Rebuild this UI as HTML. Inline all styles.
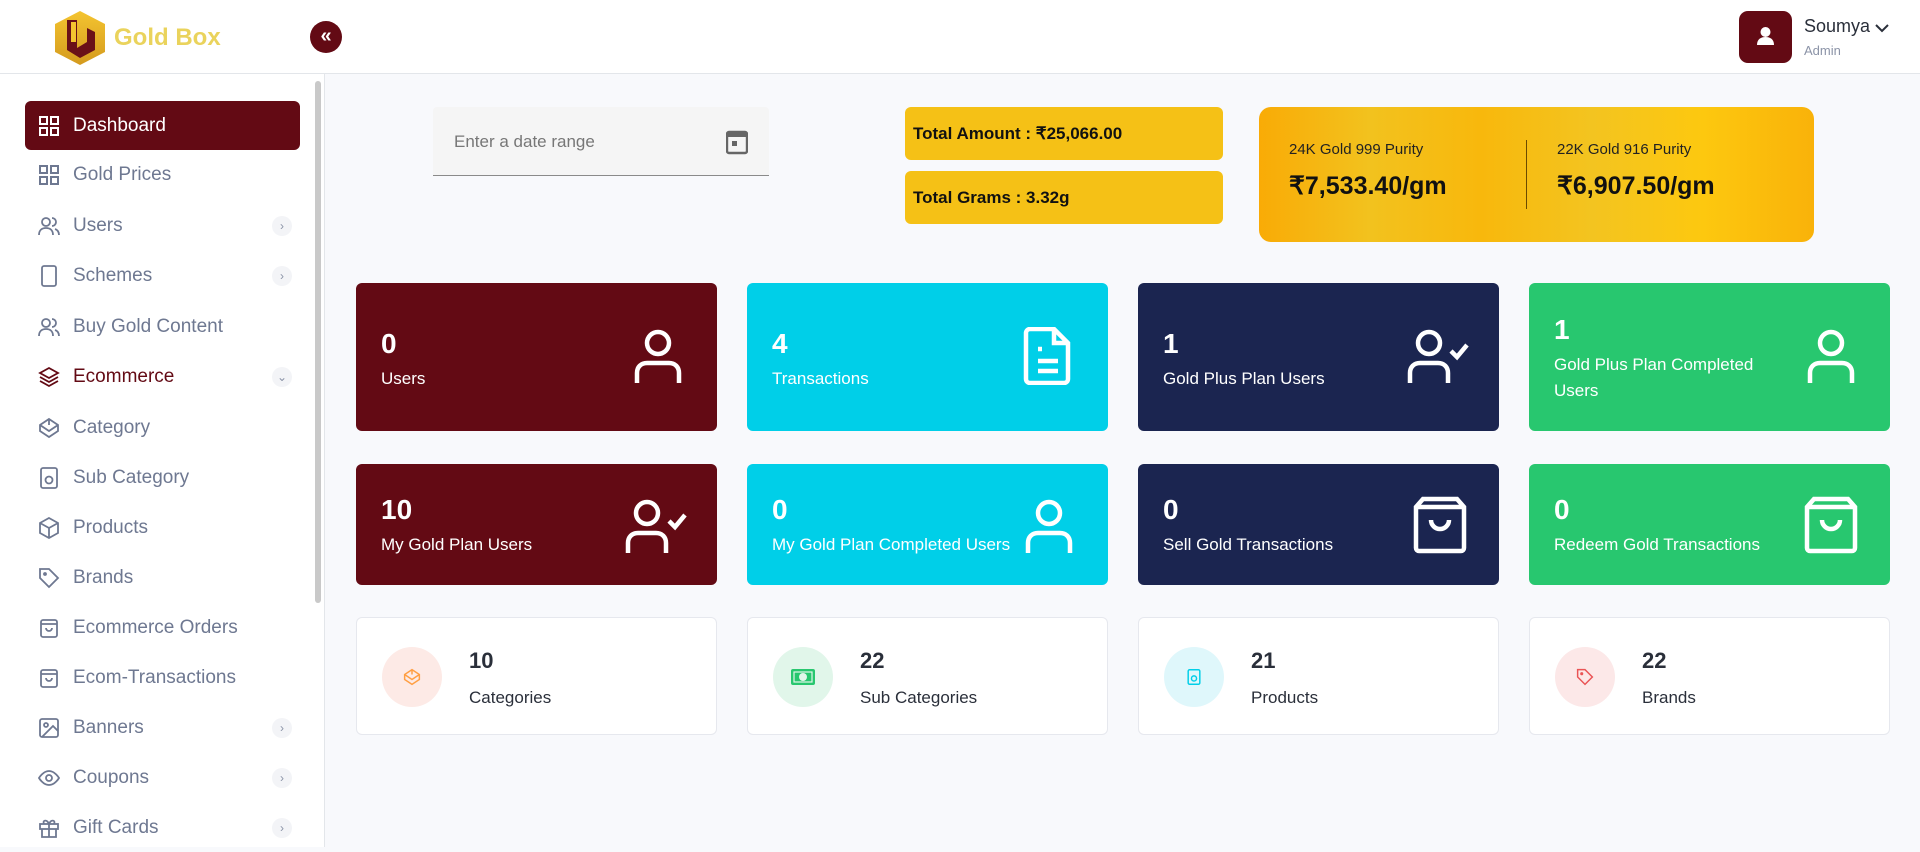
<!DOCTYPE html>
<html><head><meta charset="utf-8"><style>
*{box-sizing:border-box;margin:0;padding:0}
body{width:1920px;height:847px;overflow:hidden;background:#f8f9fc;font-family:"Liberation Sans",sans-serif;position:relative}
.hdr{position:absolute;left:0;top:0;width:1920px;height:74px;background:#fff;border-bottom:1px solid #e3e6ea}
.side{position:absolute;left:0;top:74px;width:325px;height:773px;background:#fff;border-right:1px solid #e3e6ea}
.mi{position:absolute;left:25px;width:275px;height:49px;display:flex;align-items:center;color:#6e7891;font-size:19px}
.mi svg{position:absolute;left:13px;width:22px;height:22px}
.mi span{position:absolute;left:48px}
.mi .ch{position:absolute;left:247px;width:20px;height:20px;border-radius:50%;background:#f3f4f7;color:#8b93a7;font-size:12px;display:flex;align-items:center;justify-content:center}
.act{background:#630a14;color:#fff;border-radius:6px}
.card{position:absolute;width:361px;border-radius:6px;color:#fff}
.card .n{position:absolute;left:25px;font-size:28px;font-weight:bold}
.card .l{position:absolute;left:25px;font-size:17px;line-height:26px}
.card svg{position:absolute;right:30px;width:58px;height:58px}
.wc{position:absolute;top:617px;height:118px;width:361px;background:#fff;border:1px solid #e6e8ee;border-radius:6px}
.wc .c{position:absolute;left:25px;top:29px;width:60px;height:60px;border-radius:50%;display:flex;align-items:center;justify-content:center}
.wc .n{position:absolute;left:112px;top:30px;font-size:22px;font-weight:bold;color:#2a2f3a}
.wc .l{position:absolute;left:112px;top:70px;font-size:17px;color:#2a2f3a}
</style></head><body>
<div class="hdr">
  <svg style="position:absolute;left:53px;top:10px" width="54" height="56" viewBox="0 0 54 56"><defs><linearGradient id="g" x1="0" y1="0" x2="0" y2="1"><stop offset="0" stop-color="#f4c430"/><stop offset="1" stop-color="#d49a1e"/></linearGradient></defs><polygon points="27,1 52,14 52,42 27,55 2,42 2,14" fill="url(#g)"/><path d="M14 10h10v28l10 -6V18l8 4v18l-15 8-13-8z" fill="#6a1018"/><path d="M18 12h5v20h-5z" fill="#f4c430"/></svg>
  <div style="position:absolute;left:114px;top:24px;font-size:24px;font-weight:bold;color:#ead35c">Gold Box</div>
  <div style="position:absolute;left:310px;top:21px;width:32px;height:32px;border-radius:50%;background:#630a14;color:#fff;font-size:20px;font-weight:bold;text-align:center;line-height:30px">«</div>
  <div style="position:absolute;left:1739px;top:11px;width:53px;height:52px;border-radius:9px;background:#630a14"><svg width="53" height="52" viewBox="0 0 53 52"><circle cx="26.5" cy="21" r="5" fill="#fff"/><path d="M18 34c0-6 4-8 8.5-8s8.5 2 8.5 8z" fill="#fff"/></svg></div>
  <div style="position:absolute;left:1804px;top:16px;font-size:18px;color:#2a2f3a">Soumya</div>
  <div style="position:absolute;left:1804px;top:43px;font-size:13px;color:#8b93a7">Admin</div>
  <svg style="position:absolute;left:1874px;top:22px" width="16" height="12" viewBox="0 0 16 12"><path d="M2 3l6 6 6-6" fill="none" stroke="#2a2f3a" stroke-width="2"/></svg>
</div>
<div class="side">
  <div style="position:absolute;left:315px;top:7px;width:6px;height:522px;border-radius:3px;background:#c9c9c9"></div>
</div>
<div class="mi act" style="top:101px"><svg viewBox="0 0 22 22" fill="none" stroke="#fff" stroke-width="2"><rect x="2" y="2" width="7" height="7"/><rect x="13" y="2" width="7" height="7"/><rect x="2" y="13" width="7" height="7"/><rect x="13" y="13" width="7" height="7"/></svg><span>Dashboard</span></div>
<div class="mi" style="top:150px"><svg viewBox="0 0 22 22" fill="none" stroke="#6e7891" stroke-width="2"><rect x="2" y="2" width="7" height="7"/><rect x="13" y="2" width="7" height="7"/><rect x="2" y="13" width="7" height="7"/><rect x="13" y="13" width="7" height="7"/></svg><span>Gold Prices</span></div>
<div class="mi" style="top:201px"><svg viewBox="0 0 22 22" fill="none" stroke="#6e7891" stroke-width="1.8"><circle cx="8" cy="7" r="4"/><path d="M1 20c0-5 3-7 7-7s7 2 7 7M14 3a4 4 0 010 8M17 14c3 1 4 3 4 6"/></svg><span>Users</span><div class="ch">›</div></div>
<div class="mi" style="top:251px"><svg viewBox="0 0 22 22" fill="none" stroke="#6e7891" stroke-width="1.8"><rect x="4" y="1" width="14" height="20" rx="2"/><path d="M11 17h.01"/></svg><span>Schemes</span><div class="ch">›</div></div>
<div class="mi" style="top:302px"><svg viewBox="0 0 22 22" fill="none" stroke="#6e7891" stroke-width="1.8"><circle cx="8" cy="7" r="4"/><path d="M1 20c0-5 3-7 7-7s7 2 7 7M14 3a4 4 0 010 8M17 14c3 1 4 3 4 6"/></svg><span>Buy Gold Content</span></div>
<div class="mi" style="top:352px;color:#630a14"><svg viewBox="0 0 22 22" fill="none" stroke="#630a14" stroke-width="1.8"><path d="M11 2l9 5-9 5-9-5zM2 11l9 5 9-5M2 15l9 5 9-5"/></svg><span>Ecommerce</span><div class="ch">⌄</div></div>
<div class="mi" style="top:403px"><svg viewBox="0 0 22 22" fill="none" stroke="#6e7891" stroke-width="1.8"><path d="M11 2l9 6v6l-9 6-9-6V8z M2 8l9 6 9-6M11 2v6"/></svg><span>Category</span></div>
<div class="mi" style="top:453px"><svg viewBox="0 0 22 22" fill="none" stroke="#6e7891" stroke-width="1.8"><rect x="3" y="1" width="16" height="20" rx="2"/><circle cx="11" cy="13" r="3.5"/></svg><span>Sub Category</span></div>
<div class="mi" style="top:503px"><svg viewBox="0 0 22 22" fill="none" stroke="#6e7891" stroke-width="1.8"><path d="M11 1l9 5v10l-9 5-9-5V6zM2 6l9 5 9-5M11 11v10"/></svg><span>Products</span></div>
<div class="mi" style="top:553px"><svg viewBox="0 0 22 22" fill="none" stroke="#6e7891" stroke-width="1.8"><path d="M2 2h9l9 9-9 9-9-9z"/><circle cx="7" cy="7" r="1"/></svg><span>Brands</span></div>
<div class="mi" style="top:603px"><svg viewBox="0 0 22 22" fill="none" stroke="#6e7891" stroke-width="1.8"><rect x="3" y="3" width="16" height="17" rx="2"/><path d="M3 7h16M8 11a3 3 0 006 0"/></svg><span>Ecommerce Orders</span></div>
<div class="mi" style="top:653px"><svg viewBox="0 0 22 22" fill="none" stroke="#6e7891" stroke-width="1.8"><rect x="3" y="3" width="16" height="17" rx="2"/><path d="M3 7h16M8 11a3 3 0 006 0"/></svg><span>Ecom-Transactions</span></div>
<div class="mi" style="top:703px"><svg viewBox="0 0 22 22" fill="none" stroke="#6e7891" stroke-width="1.8"><rect x="2" y="2" width="18" height="18" rx="2"/><circle cx="8" cy="8" r="2"/><path d="M20 14l-5-5-11 11"/></svg><span>Banners</span><div class="ch">›</div></div>
<div class="mi" style="top:753px"><svg viewBox="0 0 22 22" fill="none" stroke="#6e7891" stroke-width="1.8"><path d="M1 11s4-7 10-7 10 7 10 7-4 7-10 7S1 11 1 11z"/><circle cx="11" cy="11" r="3"/></svg><span>Coupons</span><div class="ch">›</div></div>
<div class="mi" style="top:803px"><svg viewBox="0 0 22 22" fill="none" stroke="#6e7891" stroke-width="1.8"><rect x="2" y="7" width="18" height="5"/><path d="M4 12v8h14v-8M11 7v13M11 7c-2-5-7-4-5 0M11 7c2-5 7-4 5 0"/></svg><span>Gift Cards</span><div class="ch">›</div></div>

<div style="position:absolute;left:433px;top:107px;width:336px;height:69px;background:#f5f5f5;border-bottom:1px solid #8a8a8a;border-radius:4px 4px 0 0">
  <div style="position:absolute;left:21px;top:25px;font-size:17px;color:#777">Enter a date range</div>
  <svg style="position:absolute;left:293px;top:22px" width="22" height="26" viewBox="0 0 22 26"><rect x="1" y="3" width="20" height="21" rx="2" fill="none" stroke="#666" stroke-width="2.4"/><rect x="1" y="3" width="20" height="5" fill="#666"/><rect x="6" y="12" width="5" height="5" fill="#666"/></svg>
</div>
<div style="position:absolute;left:905px;top:107px;width:318px;height:53px;background:#f5c116;border-radius:6px;font-size:17px;font-weight:bold;color:#111;padding:17px 0 0 8px">Total Amount : ₹25,066.00</div>
<div style="position:absolute;left:905px;top:171px;width:318px;height:53px;background:#f5c116;border-radius:6px;font-size:17px;font-weight:bold;color:#111;padding:17px 0 0 8px">Total Grams : 3.32g</div>
<div style="position:absolute;left:1259px;top:107px;width:555px;height:135px;border-radius:12px;background:linear-gradient(90deg,#f9ab06,#f2c21e 20%,#f8b80c 40%,#f3c420 60%,#fdc80f 80%,#f9b209)">
  <div style="position:absolute;left:30px;top:34px;font-size:15px;color:#222">24K Gold 999 Purity</div>
  <div style="position:absolute;left:30px;top:64px;font-size:25px;font-weight:bold;color:#111">₹7,533.40/gm</div>
  <div style="position:absolute;left:267px;top:33px;width:1px;height:69px;background:#6b4a00"></div>
  <div style="position:absolute;left:298px;top:34px;font-size:15px;color:#222">22K Gold 916 Purity</div>
  <div style="position:absolute;left:298px;top:64px;font-size:25px;font-weight:bold;color:#111">₹6,907.50/gm</div>
</div>

<!-- row1 -->
<div class="card" style="left:356px;top:283px;height:148px;background:#630a14"><div class="n" style="top:45px">0</div><div class="l" style="top:83px">Users</div><svg viewBox="0 0 58 58" fill="none" stroke="#fff" stroke-width="4.5" style="top:44px"><circle cx="29" cy="16" r="11"/><path d="M8 56V46c0-6 4-10 10-10h22c6 0 10 4 10 10v10"/></svg></div>
<div class="card" style="left:747px;top:283px;height:148px;background:#00cfe8"><div class="n" style="top:45px">4</div><div class="l" style="top:83px">Transactions</div><svg viewBox="0 0 58 58" fill="none" stroke="#fff" stroke-width="4.5" style="top:44px"><path d="M10 2h24l14 14v36a4 4 0 01-4 4H10a4 4 0 01-4-4V6a4 4 0 014-4zM34 2v14h14M18 22h4M18 34h20M18 44h20"/></svg></div>
<div class="card" style="left:1138px;top:283px;height:148px;background:#1b2550"><div class="n" style="top:45px">1</div><div class="l" style="top:83px">Gold Plus Plan Users</div><svg viewBox="0 0 62 58" fill="none" stroke="#fff" stroke-width="4.5" style="top:44px;width:62px"><circle cx="22" cy="16" r="11"/><path d="M3 56V46c0-6 4-10 10-10h18c6 0 10 4 10 10v10M44 24l6 6 10-12"/></svg></div>
<div class="card" style="left:1529px;top:283px;height:148px;background:#28c76f"><div class="n" style="top:31px">1</div><div class="l" style="top:69px">Gold Plus Plan Completed<br>Users</div><svg viewBox="0 0 58 58" fill="none" stroke="#fff" stroke-width="4.5" style="top:44px"><circle cx="29" cy="16" r="11"/><path d="M8 56V46c0-6 4-10 10-10h22c6 0 10 4 10 10v10"/></svg></div>
<!-- row2 -->
<div class="card" style="left:356px;top:464px;height:121px;background:#630a14"><div class="n" style="top:30px">10</div><div class="l" style="top:68px">My Gold Plan Users</div><svg viewBox="0 0 62 58" fill="none" stroke="#fff" stroke-width="4.5" style="top:33px;width:62px"><circle cx="22" cy="16" r="11"/><path d="M3 56V46c0-6 4-10 10-10h18c6 0 10 4 10 10v10M44 24l6 6 10-12"/></svg></div>
<div class="card" style="left:747px;top:464px;height:121px;background:#00cfe8"><div class="n" style="top:30px">0</div><div class="l" style="top:68px">My Gold Plan Completed Users</div><svg viewBox="0 0 58 58" fill="none" stroke="#fff" stroke-width="4.5" style="top:33px"><circle cx="29" cy="16" r="11"/><path d="M8 56V46c0-6 4-10 10-10h22c6 0 10 4 10 10v10"/></svg></div>
<div class="card" style="left:1138px;top:464px;height:121px;background:#1b2550"><div class="n" style="top:30px">0</div><div class="l" style="top:68px">Sell Gold Transactions</div><svg viewBox="0 0 58 58" fill="none" stroke="#fff" stroke-width="4.5" style="top:32px"><path d="M12 3h34l7 8v41a3 3 0 01-3 3H8a3 3 0 01-3-3V11zM5 11h48M20 24a9 9 0 0018 0"/></svg></div>
<div class="card" style="left:1529px;top:464px;height:121px;background:#28c76f"><div class="n" style="top:30px">0</div><div class="l" style="top:68px">Redeem Gold Transactions</div><svg viewBox="0 0 58 58" fill="none" stroke="#fff" stroke-width="4.5" style="top:32px"><path d="M12 3h34l7 8v41a3 3 0 01-3 3H8a3 3 0 01-3-3V11zM5 11h48M20 24a9 9 0 0018 0"/></svg></div>
<!-- row3 -->
<div class="wc" style="left:356px"><div class="c" style="background:#fdeae6"><svg width="18" height="18" viewBox="0 0 22 22" fill="none" stroke="#ff9f43" stroke-width="1.8"><path d="M11 2l9 6v6l-9 6-9-6V8z M2 8l9 6 9-6M11 2v6"/></svg></div><div class="n">10</div><div class="l">Categories</div></div>
<div class="wc" style="left:747px"><div class="c" style="background:#e1f6ea"><svg width="26" height="20" viewBox="0 0 26 20"><rect x="1" y="2" width="24" height="16" rx="2" fill="#28c76f"/><circle cx="13" cy="10" r="4" fill="#e1f6ea"/><rect x="4" y="5" width="18" height="10" fill="none" stroke="#e1f6ea" stroke-width="1.2"/></svg></div><div class="n">22</div><div class="l">Sub Categories</div></div>
<div class="wc" style="left:1138px"><div class="c" style="background:#dff7fb"><svg width="16" height="18" viewBox="0 0 22 22" fill="none" stroke="#00cfe8" stroke-width="2"><rect x="3" y="1" width="16" height="20" rx="2"/><circle cx="11" cy="13" r="3.5"/></svg></div><div class="n">21</div><div class="l">Products</div></div>
<div class="wc" style="left:1529px"><div class="c" style="background:#fce8e8"><svg width="18" height="18" viewBox="0 0 22 22" fill="none" stroke="#ea5455" stroke-width="1.8"><path d="M2 2h9l9 9-9 9-9-9z"/><circle cx="7" cy="7" r="1"/></svg></div><div class="n">22</div><div class="l">Brands</div></div>
</body></html>
